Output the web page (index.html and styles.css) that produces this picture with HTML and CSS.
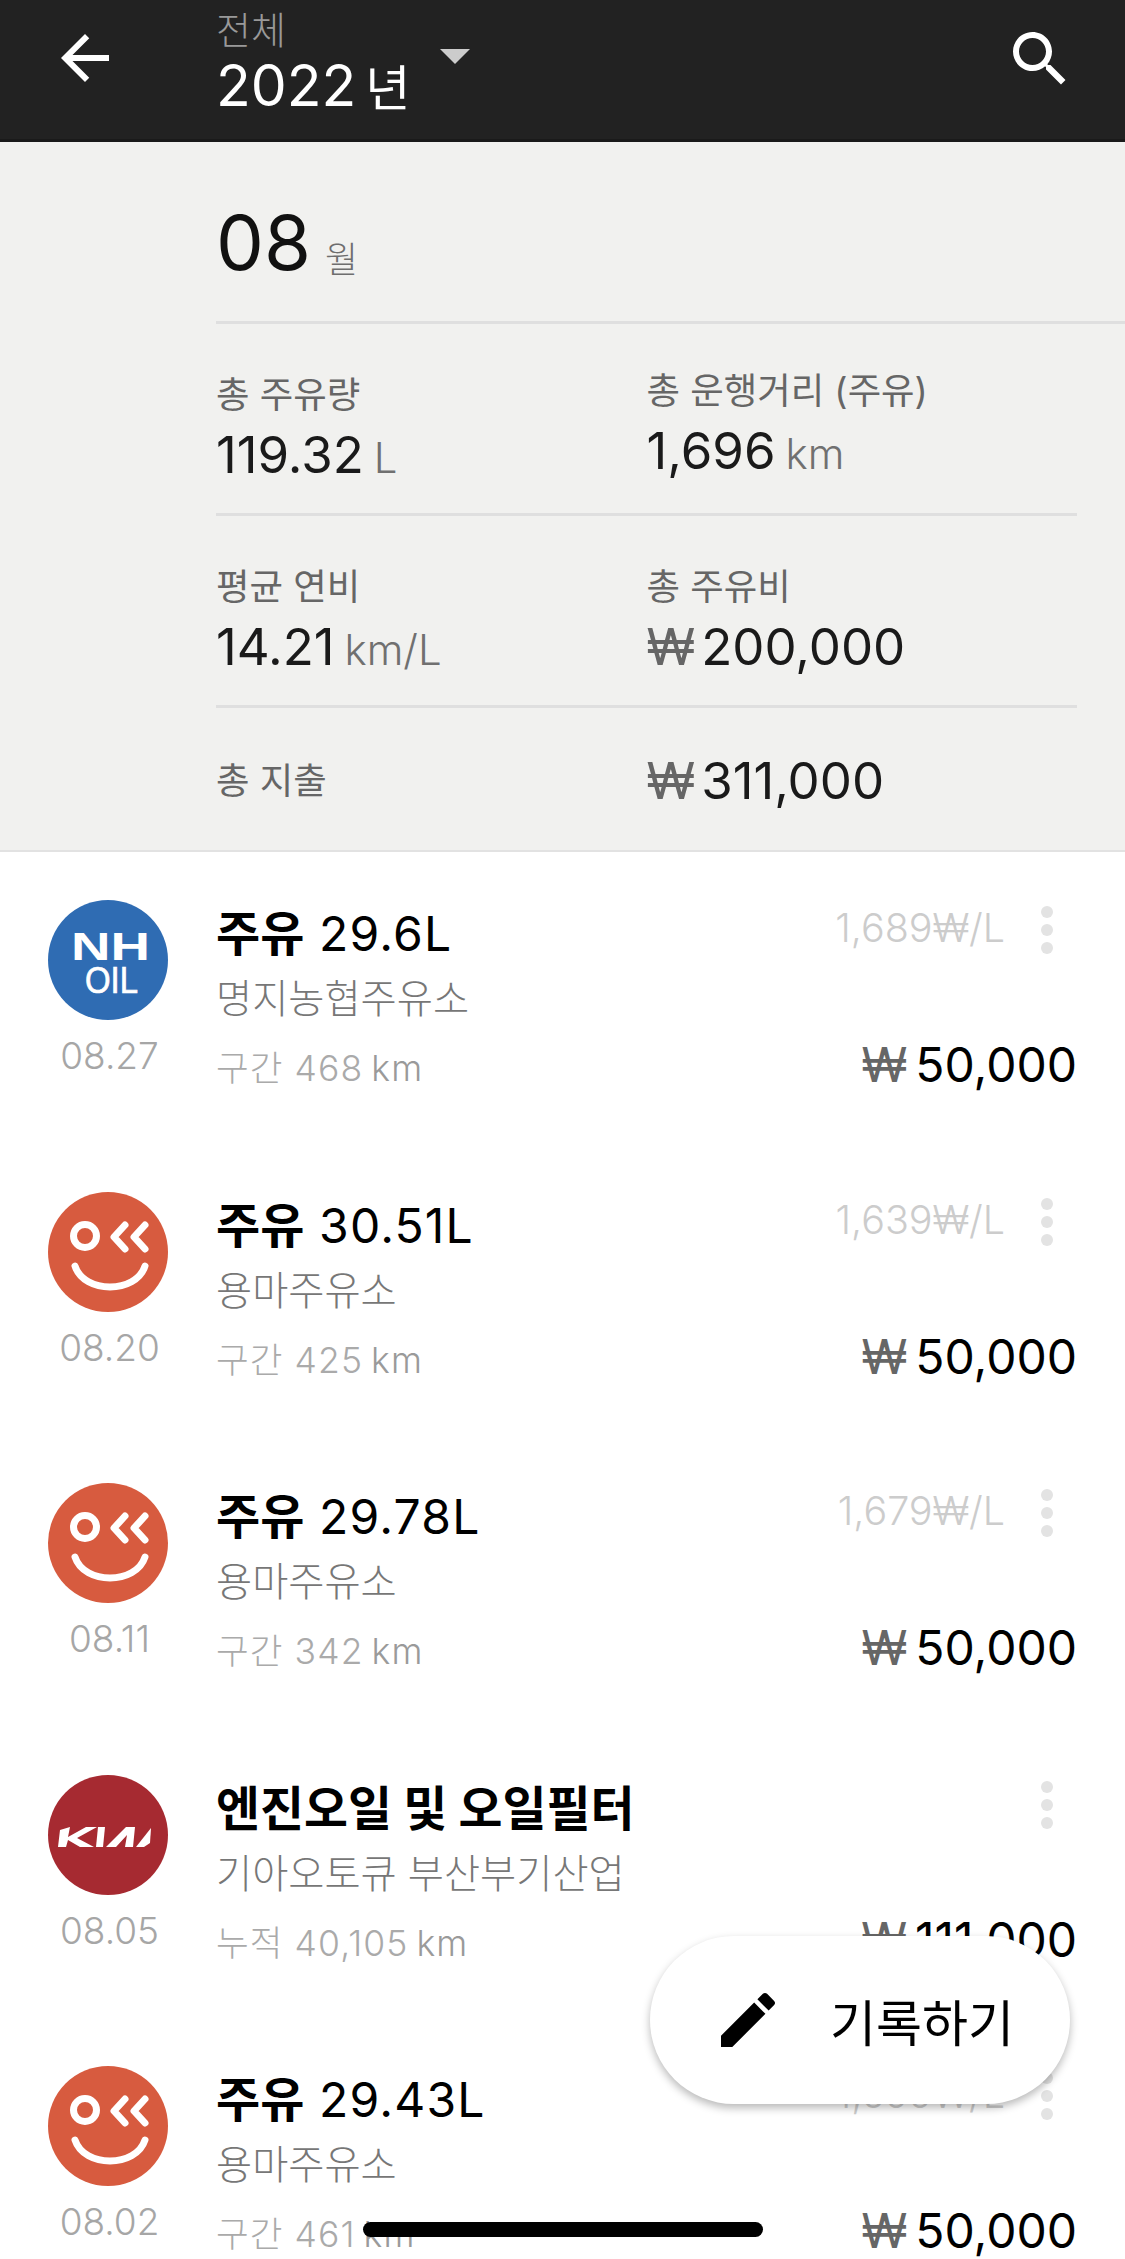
FILE: index.html
```html
<!DOCTYPE html>
<html lang="ko">
<head>
<meta charset="utf-8">
<title>주유 기록</title>
<link rel="stylesheet" href="styles.css">
</head>
<body>
<div class="page">
  <header class="topbar">
    <svg class="ic-back" viewBox="0 0 24 24"><path d="M20 11H7.83l5.59-5.59L12 4l-8 8 8 8 1.41-1.41L7.83 13H20v-2z"/></svg>
    <div class="period">
      <div class="period-label">전체</div>
      <div class="period-year"><span class="year-num">2022</span><span class="year-unit">년</span></div>
    </div>
    <div class="caret"></div>
    <svg class="ic-search" viewBox="0 0 24 24"><path d="M15.5 14h-.79l-.28-.27C15.41 12.59 16 11.11 16 9.5 16 5.91 13.09 3 9.5 3S3 5.91 3 9.5 5.91 16 9.5 16c1.61 0 3.09-.59 4.23-1.57l.27.28v.79l5 4.99L20.49 19l-4.99-5zm-6 0C7.01 14 5 11.99 5 9.5S7.01 5 9.5 5 14 7.01 14 9.5 11.99 14 9.5 14z"/></svg>
  </header>

  <section class="summary">
    <div class="month"><span class="month-num">08</span><span class="month-unit">월</span></div>
    <div class="stats">
      <div class="stat-row">
        <div class="stat">
          <div class="stat-label">총 주유량</div>
          <div class="stat-value">119.32<span class="unit">L</span></div>
        </div>
        <div class="stat stat-raised">
          <div class="stat-label">총 운행거리 (주유)</div>
          <div class="stat-value">1,696<span class="unit">km</span></div>
        </div>
      </div>
      <div class="stat-row">
        <div class="stat">
          <div class="stat-label">평균 연비</div>
          <div class="stat-value">14.21<span class="unit">km/L</span></div>
        </div>
        <div class="stat">
          <div class="stat-label">총 주유비</div>
          <div class="stat-value"><span class="won">₩</span>200,000</div>
        </div>
      </div>
      <div class="stat-row stat-row-last">
        <div class="stat-label stat-cell">총 지출</div>
        <div class="stat-value stat-cell"><span class="won">₩</span>311,000</div>
      </div>
    </div>
  </section>

  <main class="list">
    <article class="item">
      <div class="brand">
        <svg class="logo" viewBox="0 0 120 120"><circle class="nh-bg" cx="60" cy="60" r="60"/><text class="nh-a" x="23" y="60" textLength="79" lengthAdjust="spacingAndGlyphs">NH</text><text class="nh-b" x="37" y="93" textLength="53" lengthAdjust="spacingAndGlyphs">OIL</text></svg>
        <div class="date">08.27</div>
      </div>
      <div class="body">
        <div class="title"><b>주유</b> 29.6L</div>
        <div class="place">명지농협주유소</div>
        <div class="meta">구간 468<span class="meta-unit">km</span></div>
      </div>
      <div class="side">
        <div class="side-top"><span class="unit-price">1,689₩/L</span><span class="dots"><i></i><i></i><i></i></span></div>
        <div class="price"><span class="won">₩</span>50,000</div>
      </div>
    </article>

    <article class="item">
      <div class="brand">
        <svg class="logo" viewBox="0 0 120 120"><use href="#smile"/></svg>
        <div class="date">08.20</div>
      </div>
      <div class="body">
        <div class="title"><b>주유</b> 30.51L</div>
        <div class="place">용마주유소</div>
        <div class="meta">구간 425<span class="meta-unit">km</span></div>
      </div>
      <div class="side">
        <div class="side-top"><span class="unit-price">1,639₩/L</span><span class="dots"><i></i><i></i><i></i></span></div>
        <div class="price"><span class="won">₩</span>50,000</div>
      </div>
    </article>

    <article class="item">
      <div class="brand">
        <svg class="logo" viewBox="0 0 120 120"><use href="#smile"/></svg>
        <div class="date">08.11</div>
      </div>
      <div class="body">
        <div class="title"><b>주유</b> 29.78L</div>
        <div class="place">용마주유소</div>
        <div class="meta">구간 342<span class="meta-unit">km</span></div>
      </div>
      <div class="side">
        <div class="side-top"><span class="unit-price">1,679₩/L</span><span class="dots"><i></i><i></i><i></i></span></div>
        <div class="price"><span class="won">₩</span>50,000</div>
      </div>
    </article>

    <article class="item">
      <div class="brand">
        <svg class="logo" viewBox="0 0 120 120"><circle class="kia-bg" cx="60" cy="60" r="60"/><g class="kia-mark"><polygon points="10,72 12,55 22,52 20,62 38,52 49,52 29,63 46,72 32,72 20,65 18,72"/><polygon points="48,72 50,52 57,52 55,72"/><polygon points="58,72 78,52 87,52 85,72 77,72 79,60 68,72"/><polygon points="88,72 103,53 102,68 96,72"/></g></svg>
        <div class="date">08.05</div>
      </div>
      <div class="body">
        <div class="title title-long"><b>엔진오일 및 오일필터</b></div>
        <div class="place">기아오토큐 부산부기산업</div>
        <div class="meta">누적 40,105<span class="meta-unit">km</span></div>
      </div>
      <div class="side">
        <div class="side-top"><span class="dots"><i></i><i></i><i></i></span></div>
        <div class="price"><span class="won">₩</span>111,000</div>
      </div>
    </article>

    <article class="item">
      <div class="brand">
        <svg class="logo" viewBox="0 0 120 120"><use href="#smile"/></svg>
        <div class="date">08.02</div>
      </div>
      <div class="body">
        <div class="title"><b>주유</b> 29.43L</div>
        <div class="place">용마주유소</div>
        <div class="meta">구간 461<span class="meta-unit">km</span></div>
      </div>
      <div class="side">
        <div class="side-top"><span class="unit-price">1,699₩/L</span><span class="dots"><i></i><i></i><i></i></span></div>
        <div class="price"><span class="won">₩</span>50,000</div>
      </div>
    </article>
  </main>

  <button class="fab" type="button">
    <svg class="ic-edit" viewBox="0 0 24 24"><path d="M3 17.25V21h3.75L17.81 9.94l-3.75-3.75L3 17.25zM20.71 7.04c.39-.39.39-1.02 0-1.41l-2.34-2.34c-.39-.39-1.02-.39-1.41 0l-1.83 1.83 3.75 3.75 1.83-1.83z"/></svg>
    <span class="fab-text">기록하기</span>
  </button>
  <div class="home-bar"></div>

  <svg class="defs" width="0" height="0">
    <defs>
      <g id="smile">
        <circle cx="60" cy="60" r="60" fill="#d75b3f"/>
        <g fill="none" stroke="#fff" stroke-width="7" stroke-linecap="round" stroke-linejoin="round">
          <circle cx="37" cy="44" r="11.5"/>
          <polyline points="77,33 66,45 77,57"/>
          <polyline points="97,33 86,45 97,57"/>
          <path d="M27 74C36 102 88 102 97 74"/>
        </g>
      </g>
    </defs>
  </svg>
</div>
</body>
</html>
```

FILE: styles.css
```css
* { box-sizing: border-box; }
html, body { margin: 0; padding: 0; background: #fff; }
body {
  font-family: Inter, "Noto Sans CJK KR", sans-serif;
  color: #111;
}
.page {
  position: relative;
  width: 1125px;
  height: 2259px;
  overflow: hidden;
  background: #fff;
}

/* top bar */
.topbar {
  position: relative;
  display: flex;
  height: 142px;
  padding-left: 216px;
  background: #222;
  border-bottom: 3px solid #1a1a1a;
}
.ic-back, .ic-search { position: absolute; width: 72px; height: 72px; fill: #fff; }
.ic-back { left: 49px; top: 22px; }
.ic-search { left: 1004px; top: 23px; }
.period { display: flex; flex-direction: column; width: 224px; }
.period-label { margin-top: 6px; font-size: 38px; line-height: 48px; color: #999; font-weight: 300; }
.period-year { display: flex; align-items: baseline; height: 68px; line-height: 64px; color: #fff; }
.year-num { font-size: 57px; font-weight: 400; }
.year-unit { margin-left: 9px; font-size: 49px; font-weight: 400; }
.caret {
  margin-top: 49px;
  width: 0;
  height: 0;
  border-left: 15px solid transparent;
  border-right: 15px solid transparent;
  border-top: 15px solid #ccc;
}

/* summary */
.summary {
  height: 710px;
  background: #f1f1ef;
  border-bottom: 2px solid #e2e2e2;
  padding-left: 216px;
}
.month {
  height: 182px;
  padding-top: 50px;
  line-height: 100px;
  border-bottom: 3px solid #dfdfdf;
}
.month-num { font-size: 76px; color: #111; font-weight: 400; }
.month-unit { margin-left: 14px; font-size: 36px; color: #6e6e6e; font-weight: 300; vertical-align: -3px; }
.stats { width: 861px; }
.stat-row {
  display: flex;
  height: 192px;
  padding-top: 47px;
  border-bottom: 3px solid #dfdfdf;
}
.stat-row-last {
  height: 145px;
  padding-top: 0;
  align-items: center;
  border-bottom: 0;
}
.stat, .stat-cell { width: 432px; }
.stat-raised { margin-top: -4px; }
.stat-label { font-size: 36.4px; line-height: 48px; color: #666; font-weight: 400; }
.stat-value { margin-top: 5px; font-size: 51px; line-height: 62px; color: #1a1a1a; font-weight: 400; white-space: nowrap; }
.stat-row-last .stat-label, .stat-row-last .stat-value { margin-top: 0; }
.unit { margin-left: 10px; font-size: 42px; color: #707070; font-weight: 300; }
.won { margin-right: 6px; color: #666; }

/* list */
.list { padding-top: 48px; }
.item { display: flex; height: 291.6px; padding-right: 48px; }
.brand { display: flex; flex-direction: column; align-items: center; width: 216px; padding: 0 48px; }
.logo { display: block; flex: none; width: 120px; height: 120px; }
.date { margin: 14px 0 0 3px; font-size: 37px; line-height: 44px; color: #a6a6a6; font-weight: 300; white-space: nowrap; }
.body { flex: 1; }
.title { margin-top: 6px; font-size: 48px; line-height: 56px; color: #000; font-weight: 400; letter-spacing: 1.2px; white-space: nowrap; }
.title b { font-weight: 700; letter-spacing: 0; }
.title-long { font-size: 47.8px; }
.place { margin-top: 9px; font-size: 39.3px; line-height: 56px; color: #777; font-weight: 300; white-space: nowrap; }
.meta { margin-top: 18px; font-size: 35.5px; line-height: 48px; color: #aaa; font-weight: 300; letter-spacing: 1.1px; white-space: nowrap; }
.meta-unit { margin-left: 8px; color: #9a9a9a; }
.side { display: flex; flex-direction: column; align-items: flex-end; }
.side-top { display: flex; justify-content: flex-end; align-items: flex-start; height: 124px; }
.unit-price { margin-top: 4px; font-size: 39.5px; line-height: 48px; color: #ccc; font-weight: 300; white-space: nowrap; }
.dots { display: flex; flex-direction: column; gap: 6px; width: 12px; margin: 6px 24px 0 36px; }
.dots i { display: block; width: 12px; height: 12px; border-radius: 50%; background: #e3e3e3; }
.price { margin-top: 10px; font-size: 48px; line-height: 62px; color: #000; font-weight: 400; white-space: nowrap; }
.price .won { margin-right: 8px; }

/* logos */
.nh-bg { fill: #2f6cb3; }
.nh-a { font-family: "Liberation Sans", sans-serif; font-size: 39px; font-weight: 700; fill: #fff; }
.nh-b { font-family: "Liberation Sans", sans-serif; font-size: 36px; fill: #fff; stroke: #fff; stroke-width: .7px; }
.kia-bg { fill: #a62a31; }
.kia-mark { fill: #fff; }
.defs { position: absolute; }

/* floating */
.fab {
  position: absolute;
  left: 650px;
  top: 1936px;
  display: flex;
  align-items: center;
  width: 420px;
  height: 168px;
  padding: 0 0 0 62px;
  border: 0;
  border-radius: 84px;
  background: #fff;
  box-shadow: 0 4px 9px rgba(0, 0, 0, .28);
  font-family: inherit;
}
.ic-edit { flex: none; width: 72px; height: 72px; fill: #000; }
.fab-text { margin-left: 46px; font-size: 50px; color: #000; font-weight: 400; }
.home-bar {
  position: absolute;
  left: 363px;
  top: 2222px;
  width: 400px;
  height: 15px;
  border-radius: 8px;
  background: #000;
}
```
